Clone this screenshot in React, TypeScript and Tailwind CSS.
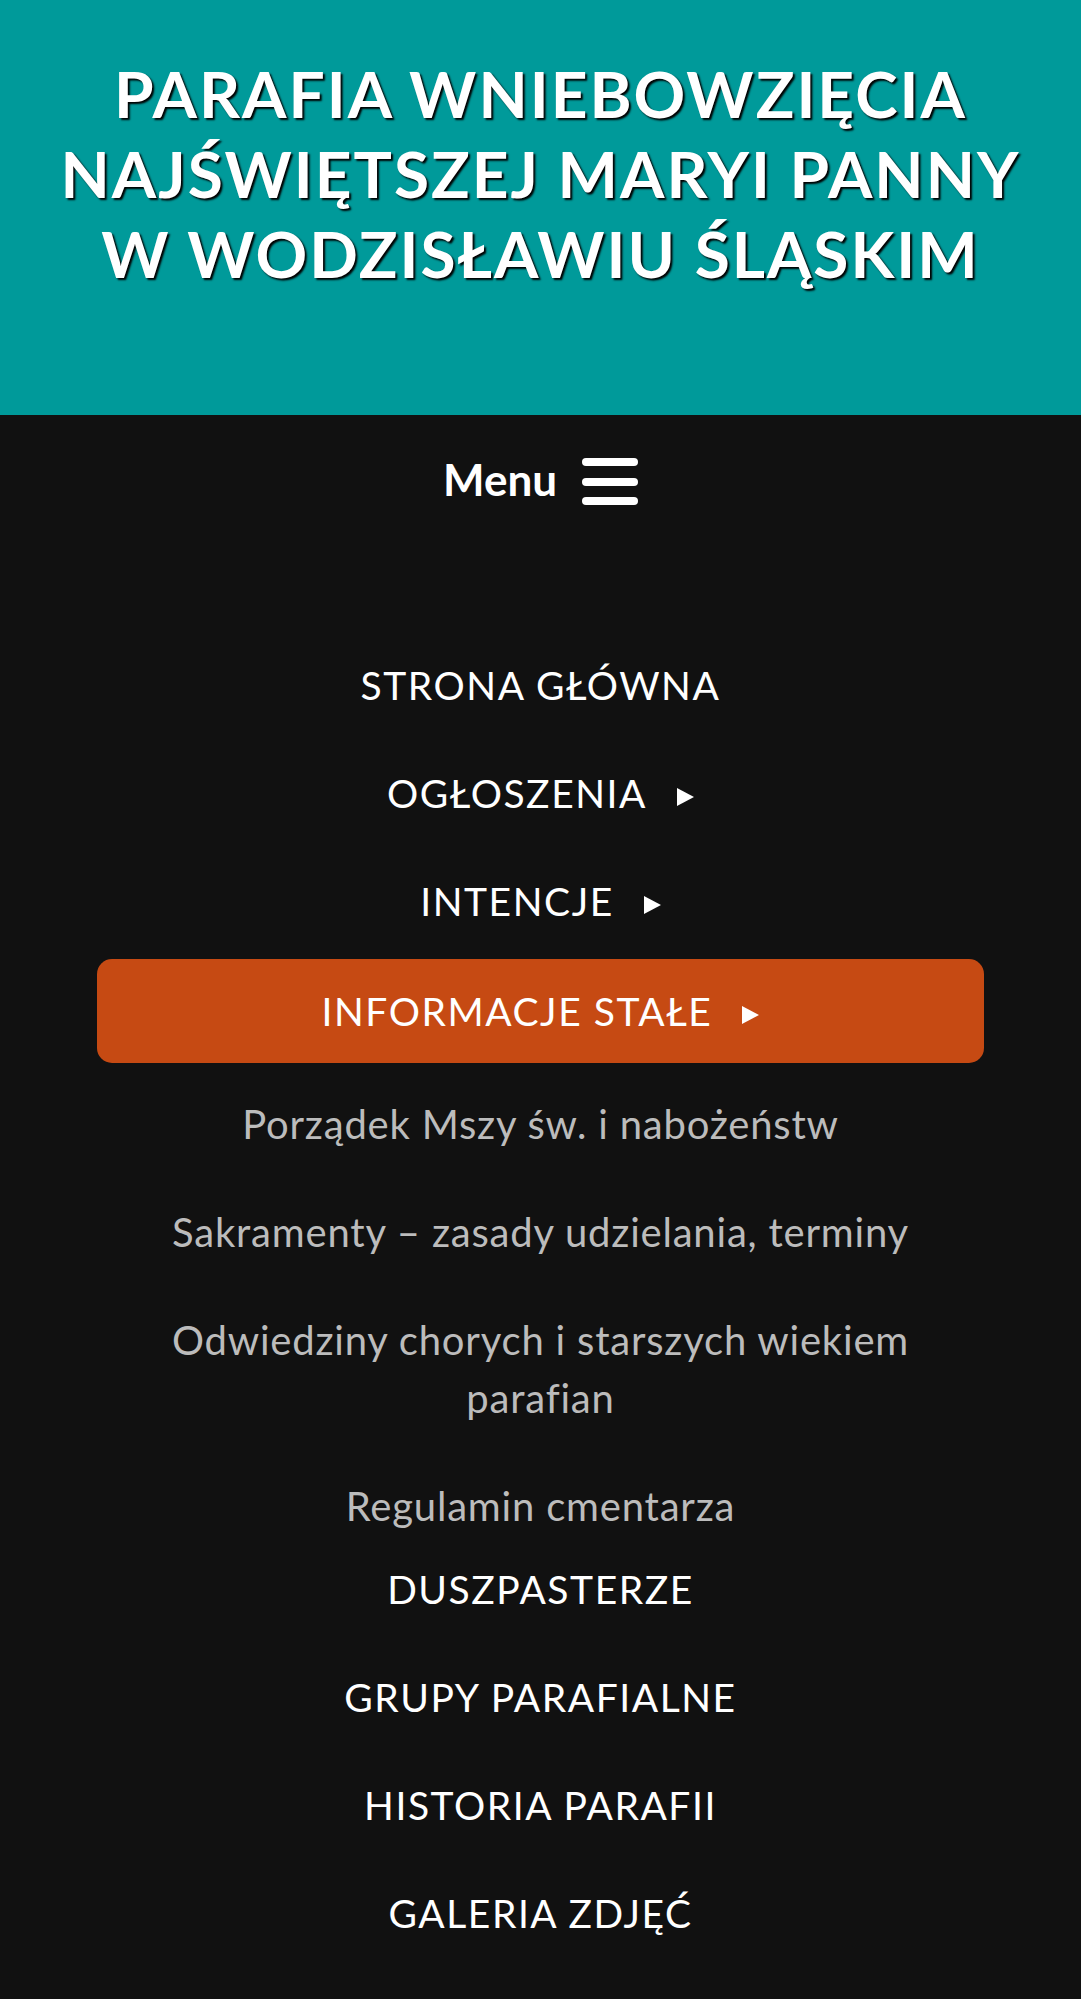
import React from "react";

const TopItem = ({ label, arrow, active }: { label: string; arrow?: boolean; active?: boolean }) => (
  <li className="py-[2px]">
    <a
      href="#"
      className={
        "flex h-[104px] items-center justify-center rounded-[15px] text-[39px] leading-[48px] uppercase tracking-[0.04em] text-white " +
        (active ? "bg-[#c64a13]" : "")
      }
    >
      <span className="flex items-baseline">
        <span>{label}</span>
        {arrow && (
          <svg width="17" height="18" viewBox="0 0 17 18" className="ml-[30px] relative top-[-2px]" aria-hidden>
            <polygon points="0,0 17,9 0,18" fill="#ffffff" />
          </svg>
        )}
      </span>
    </a>
  </li>
);

const SubItem = ({ children, last }: { children: React.ReactNode; last?: boolean }) => (
  <li
    className={
      "text-center text-[40px] leading-[58px] tracking-[0.8px] text-[#bcbcbc] pt-[25px] " +
      (last ? "pb-0" : "pb-[25px]")
    }
  >
    <a href="#">{children}</a>
  </li>
);

export default function App() {
  return (
    <div className="min-h-screen bg-[#111111] font-['Lato',sans-serif]">
      <header className="h-[415px] bg-[#009a9a] pt-[54px]">
        <h1 className="text-center text-[64px] font-bold uppercase leading-[80px] tracking-[2px] text-white [text-shadow:2px_2px_2px_#000]">
          Parafia Wniebowzięcia
          <br />
          Najświętszej Maryi Panny
          <br />w Wodzisławiu Śląskim
        </h1>
      </header>
      <nav className="px-[97px] pb-[30px]">
        <div className="mt-[40px] flex h-[48px] items-center justify-center">
          <span className="text-[44px] font-bold leading-[48px] text-white">Menu</span>
          <svg width="56" height="48" viewBox="0 0 56 48" className="ml-[25px] mt-[6px]" aria-hidden>
            <rect x="0" y="0" width="56" height="8" rx="4" fill="#fff" />
            <rect x="0" y="20" width="56" height="8" rx="4" fill="#fff" />
            <rect x="0" y="39" width="56" height="8" rx="4" fill="#fff" />
          </svg>
        </div>
        <ul className="mt-[128px]">
          <TopItem label="Strona główna" />
          <TopItem label="Ogłoszenia" arrow />
          <TopItem label="Intencje" arrow />
          <li className="pt-[4px] pb-[2px]">
            <a
              href="#"
              className="flex h-[104px] items-center justify-center rounded-[15px] bg-[#c64a13] text-[39px] leading-[48px] uppercase tracking-[0.04em] text-white"
            >
              <span className="flex items-baseline">
                <span>Informacje stałe</span>
                <svg width="17" height="18" viewBox="0 0 17 18" className="ml-[30px] relative top-[-2px]" aria-hidden>
                  <polygon points="0,0 17,9 0,18" fill="#ffffff" />
                </svg>
              </span>
            </a>
          </li>
          <li>
            <ul className="mt-[5px]">
              <SubItem>Porządek Mszy św. i nabożeństw</SubItem>
              <SubItem>Sakramenty – zasady udzielania, terminy</SubItem>
              <SubItem>
                Odwiedziny chorych i starszych wiekiem
                <br />
                parafian
              </SubItem>
              <SubItem last>Regulamin cmentarza</SubItem>
            </ul>
          </li>
          <TopItem label="Duszpasterze" />
          <TopItem label="Grupy parafialne" />
          <TopItem label="Historia parafii" />
          <TopItem label="Galeria zdjęć" />
        </ul>
      </nav>
    </div>
  );
}
